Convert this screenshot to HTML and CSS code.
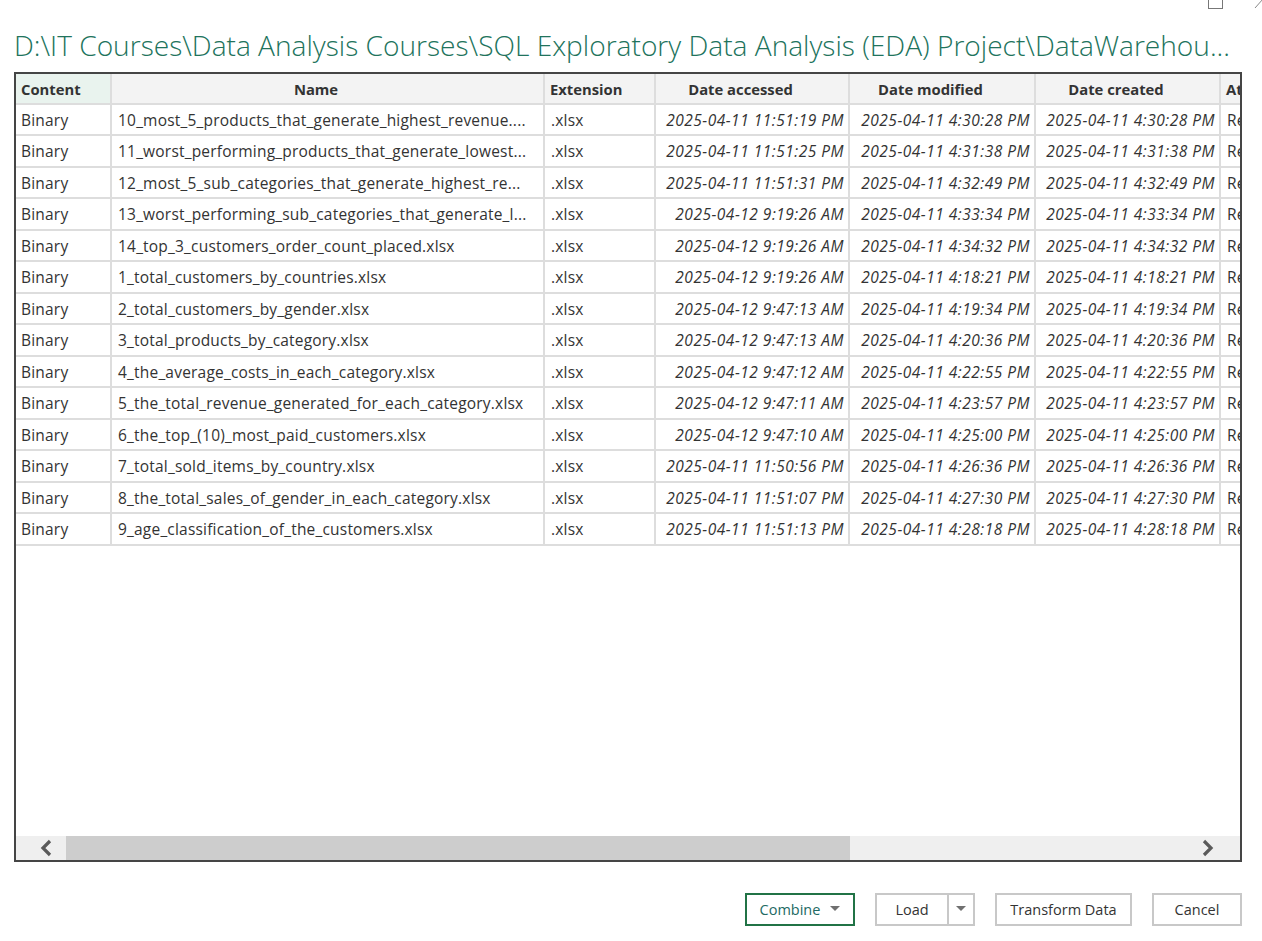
FILE: index.html
```html
<!DOCTYPE html>
<html>
<head>
<meta charset="utf-8">
<link rel="stylesheet" href="styles.css">
</head>
<body>
<div class="dialog">
  <div class="winctl">
    <span class="maxbox"></span>
    <svg class="diag" width="10" height="12" viewBox="0 0 10 12"><path d="M1 11 L9 2" stroke="#888" stroke-width="1" fill="none"/></svg>
  </div>
  <h1 class="title">D:\IT Courses\Data Analysis Courses\SQL Exploratory Data Analysis (EDA) Project\DataWarehou...</h1>
  <div class="frame">
    <div class="gridwrap">
      <table class="grid">
        <colgroup>
          <col style="width:96px"><col style="width:433px"><col style="width:111px"><col style="width:194px"><col style="width:186px"><col style="width:185px"><col style="width:160px">
        </colgroup>
        <thead>
          <tr>
            <th class="sel left">Content</th><th>Name</th><th class="left">Extension</th><th>Date accessed</th><th>Date modified</th><th>Date created</th><th class="left">Attributes</th>
          </tr>
        </thead>
        <tbody>
          <tr><td>Binary</td><td>10_most_5_products_that_generate_highest_revenue....</td><td>.xlsx</td><td class="d">2025-04-11 11:51:19 PM</td><td class="d">2025-04-11 4:30:28 PM</td><td class="d">2025-04-11 4:30:28 PM</td><td>Record</td></tr>
          <tr><td>Binary</td><td>11_worst_performing_products_that_generate_lowest...</td><td>.xlsx</td><td class="d">2025-04-11 11:51:25 PM</td><td class="d">2025-04-11 4:31:38 PM</td><td class="d">2025-04-11 4:31:38 PM</td><td>Record</td></tr>
          <tr><td>Binary</td><td>12_most_5_sub_categories_that_generate_highest_re...</td><td>.xlsx</td><td class="d">2025-04-11 11:51:31 PM</td><td class="d">2025-04-11 4:32:49 PM</td><td class="d">2025-04-11 4:32:49 PM</td><td>Record</td></tr>
          <tr><td>Binary</td><td>13_worst_performing_sub_categories_that_generate_l...</td><td>.xlsx</td><td class="d">2025-04-12 9:19:26 AM</td><td class="d">2025-04-11 4:33:34 PM</td><td class="d">2025-04-11 4:33:34 PM</td><td>Record</td></tr>
          <tr><td>Binary</td><td>14_top_3_customers_order_count_placed.xlsx</td><td>.xlsx</td><td class="d">2025-04-12 9:19:26 AM</td><td class="d">2025-04-11 4:34:32 PM</td><td class="d">2025-04-11 4:34:32 PM</td><td>Record</td></tr>
          <tr><td>Binary</td><td>1_total_customers_by_countries.xlsx</td><td>.xlsx</td><td class="d">2025-04-12 9:19:26 AM</td><td class="d">2025-04-11 4:18:21 PM</td><td class="d">2025-04-11 4:18:21 PM</td><td>Record</td></tr>
          <tr><td>Binary</td><td>2_total_customers_by_gender.xlsx</td><td>.xlsx</td><td class="d">2025-04-12 9:47:13 AM</td><td class="d">2025-04-11 4:19:34 PM</td><td class="d">2025-04-11 4:19:34 PM</td><td>Record</td></tr>
          <tr><td>Binary</td><td>3_total_products_by_category.xlsx</td><td>.xlsx</td><td class="d">2025-04-12 9:47:13 AM</td><td class="d">2025-04-11 4:20:36 PM</td><td class="d">2025-04-11 4:20:36 PM</td><td>Record</td></tr>
          <tr><td>Binary</td><td>4_the_average_costs_in_each_category.xlsx</td><td>.xlsx</td><td class="d">2025-04-12 9:47:12 AM</td><td class="d">2025-04-11 4:22:55 PM</td><td class="d">2025-04-11 4:22:55 PM</td><td>Record</td></tr>
          <tr><td>Binary</td><td>5_the_total_revenue_generated_for_each_category.xlsx</td><td>.xlsx</td><td class="d">2025-04-12 9:47:11 AM</td><td class="d">2025-04-11 4:23:57 PM</td><td class="d">2025-04-11 4:23:57 PM</td><td>Record</td></tr>
          <tr><td>Binary</td><td>6_the_top_(10)_most_paid_customers.xlsx</td><td>.xlsx</td><td class="d">2025-04-12 9:47:10 AM</td><td class="d">2025-04-11 4:25:00 PM</td><td class="d">2025-04-11 4:25:00 PM</td><td>Record</td></tr>
          <tr><td>Binary</td><td>7_total_sold_items_by_country.xlsx</td><td>.xlsx</td><td class="d">2025-04-11 11:50:56 PM</td><td class="d">2025-04-11 4:26:36 PM</td><td class="d">2025-04-11 4:26:36 PM</td><td>Record</td></tr>
          <tr><td>Binary</td><td>8_the_total_sales_of_gender_in_each_category.xlsx</td><td>.xlsx</td><td class="d">2025-04-11 11:51:07 PM</td><td class="d">2025-04-11 4:27:30 PM</td><td class="d">2025-04-11 4:27:30 PM</td><td>Record</td></tr>
          <tr><td>Binary</td><td>9_age_classification_of_the_customers.xlsx</td><td>.xlsx</td><td class="d">2025-04-11 11:51:13 PM</td><td class="d">2025-04-11 4:28:18 PM</td><td class="d">2025-04-11 4:28:18 PM</td><td>Record</td></tr>
        </tbody>
      </table>
    </div>
    <div class="hscroll">
      <div class="arrow left">
        <svg width="16" height="18" viewBox="0 0 16 18"><path d="M12 2 L5 9 L12 16" stroke="#5a5a5a" stroke-width="3.2" fill="none"/></svg>
      </div>
      <div class="thumb"></div>
      <div class="track"></div>
      <div class="arrow right">
        <svg width="16" height="18" viewBox="0 0 16 18"><path d="M4 2 L11 9 L4 16" stroke="#5a5a5a" stroke-width="3.2" fill="none"/></svg>
      </div>
    </div>
  </div>
  <div class="buttons">
    <button class="btn primary">Combine <span class="caret"></span></button>
    <div class="split">
      <button class="btn load">Load</button>
      <button class="btn drop"><span class="caret"></span></button>
    </div>
    <button class="btn transform">Transform Data</button>
    <button class="btn cancel">Cancel</button>
  </div>
</div>
</body>
</html>
```

FILE: styles.css
```css
html, body {
  margin: 0;
  padding: 0;
  background: #ffffff;
}
body {
  font-family: "Open Sans", "Noto Sans", "Liberation Sans", sans-serif;
  color: #333333;
  width: 1262px;
  height: 941px;
  overflow: hidden;
}
.dialog {
  position: relative;
  padding: 0 20px 0 14px;
  width: 1262px;
  box-sizing: border-box;
}
.winctl {
  position: absolute;
  top: -5px;
  right: 0;
  width: 60px;
  height: 16px;
}
.maxbox {
  position: absolute;
  left: 6px;
  top: 0;
  width: 15px;
  height: 14px;
  border: 1px solid #777;
  box-sizing: border-box;
}
.diag {
  position: absolute;
  left: 52px;
  top: 2px;
}
.title {
  margin: 0;
  height: 72px;
  padding-top: 18px;
  box-sizing: border-box;
  font-family: "Open Sans", "Noto Sans", sans-serif;
  font-weight: 300;
  font-size: 28.1px;
  line-height: 36px;
  color: #21735c;
  white-space: nowrap;
  display: flex;
  align-items: center;
}
.frame {
  width: 1228px;
  height: 790px;
  border: 2px solid #454545;
  box-sizing: border-box;
  display: flex;
  flex-direction: column;
}
.gridwrap {
  flex: 1;
  overflow: hidden;
}
.grid {
  table-layout: fixed;
  border-collapse: separate;
  border-spacing: 0;
  width: 1365px;
  font-size: 15.5px;
}
.grid th, .grid td {
  border-right: 2px solid #dddddd;
  border-bottom: 2px solid #dddddd;
  padding: 0 5px;
  white-space: nowrap;
  overflow: hidden;
  text-overflow: clip;
  text-align: left;
}
.grid th {
  height: 30.5px;
  box-sizing: border-box;
  padding-top: 1px;
  background: #f3f3f3;
  font-weight: 700;
  font-size: 14.8px;
  text-align: center;
  padding-right: 28px;
  color: #333;
}
.grid th.left { text-align: left; padding-right: 5px; }
.grid th.sel { background: #e9f3ee; }
.grid td {
  height: 31.5px;
  padding-top: 1px;
  padding-left: 6px;
  box-sizing: border-box;
  color: #333;
  letter-spacing: 0.2px;
}
.grid td:first-child { padding-left: 5px; }
.grid td.d {
  font-style: italic;
  text-align: right;
  letter-spacing: 0.5px;
  padding-right: 4px;
}
.hscroll {
  height: 24px;
  display: flex;
  background: #efefef;
  border-top: 1px solid #ffffff;
}
.arrow {
  display: flex;
  align-items: center;
}
.arrow.left { width: 50px; padding-left: 22px; box-sizing: border-box; }
.arrow.right { width: 64px; justify-content: center; }
.thumb {
  width: 784px;
  background: #cdcdcd;
}
.track { flex: 1; }
.buttons {
  display: flex;
  justify-content: flex-end;
  align-items: center;
  margin-top: 31px;
  gap: 20px;
}
.btn {
  height: 33px;
  background: #fff;
  border: 2px solid #c8c8c8;
  font-family: "Open Sans", "Noto Sans", sans-serif;
  font-size: 14.5px;
  color: #333;
  padding: 0;
  margin: 0;
  display: flex;
  align-items: center;
  justify-content: center;
  box-sizing: border-box;
}
.btn.primary {
  width: 110px;
  border-color: #217346;
  color: #226a63;
  gap: 10px;
}
.caret {
  width: 0;
  height: 0;
  border-left: 5px solid transparent;
  border-right: 5px solid transparent;
  border-top: 5px solid #707070;
  margin-top: -2px;
}
.split { display: flex; }
.btn.load { width: 74px; border-right: 2px solid #c8c8c8; }
.btn.drop { width: 26px; border-left: none; }
.btn.transform { width: 137px; }
.btn.cancel { width: 90px; }
```
